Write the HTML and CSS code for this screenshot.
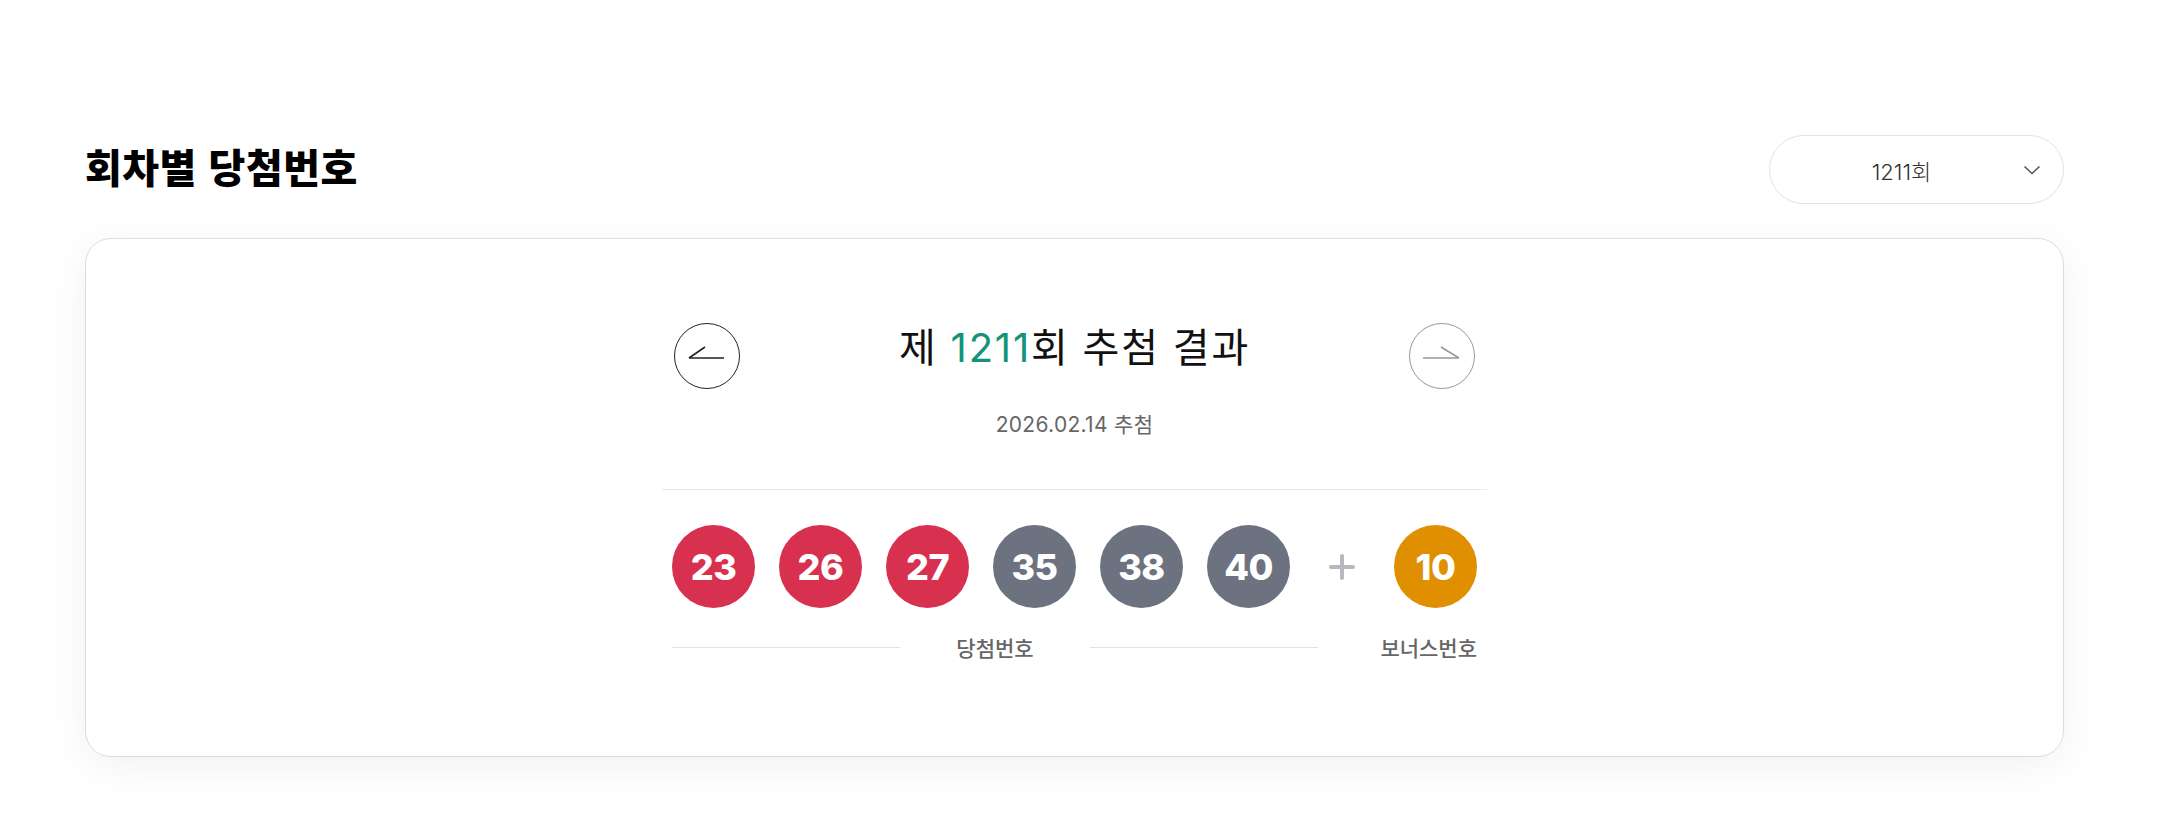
FILE: index.html
```html
<!DOCTYPE html>
<html lang="ko">
<head>
    <meta charset="UTF-8">
    <meta name="viewport" content="width=device-width, initial-scale=1.0">
    <title>회차별 당첨번호</title>
    <link rel="stylesheet" href="styles.css">
</head>
<body>
  <div class="page">
        <div class="section-head">
            <h2 class="section-title">회차별 당첨번호</h2>
            <div class="round-select">
                <span>1211회</span>
                <svg class="chevron" width="18" height="10" viewBox="0 0 18 10"><path d="M1.5 1.5l7.5 7 7.5-7" fill="none" stroke="#555" stroke-width="1.6"/></svg>
            </div>
        </div>

        <div class="result-card">
            <div class="draw-head">
                <button class="nav-btn prev">
                    <svg width="64" height="64" viewBox="0 0 64 64"><path d="M14 34h35M14 34l16-11" fill="none" stroke="#222" stroke-width="1.6"/></svg>
                </button>
                <h3 class="draw-title">제 <em>1211</em>회 추첨 결과</h3>
                <button class="nav-btn next">
                    <svg width="64" height="64" viewBox="0 0 64 64"><path d="M13 34h36M49 34l-18-11" fill="none" stroke="#999" stroke-width="1.6"/></svg>
                </button>
            </div>
            <p class="draw-date">2026.02.14 추첨</p>

            <div class="draw-numbers">
                <div class="balls">
                    <span class="ball red">23</span>
                    <span class="ball red">26</span>
                    <span class="ball red">27</span>
                    <span class="ball gray">35</span>
                    <span class="ball gray">38</span>
                    <span class="ball gray">40</span>
                    <span class="plus"></span>
                    <span class="ball orange">10</span>
                </div>
                <div class="labels">
                    <div class="label-main">
                        <span class="line"></span>
                        <span class="label-text">당첨번호</span>
                        <span class="line"></span>
                    </div>
                    <span class="label-text">보너스번호</span>
                </div>
            </div>
        </div>
    </div>
</body>
</html>
```

FILE: styles.css
```css
     body {
         margin: 0;
         font-family: "Noto Sans CJK KR", sans-serif;
         background-color: #fff;
         color: #222;
     }

     .page {
         width: 1979px;
         padding: 135px 0 60px 85px;
     }

     .section-head {
         display: flex;
         justify-content: space-between;
         align-items: center;
     }

     .section-title {
         margin: 0 0 8px;
         font-size: 40px;
         font-weight: 900;
         color: #000;
         letter-spacing: 0.5px;
     }

     .round-select {
         width: 295px;
         height: 69px;
         box-sizing: border-box;
         border: 1px solid #e2e2e2;
         border-radius: 35px;
         display: flex;
         align-items: center;
         padding: 0 22px 0 10px;
         font-family: Inter, "Noto Sans CJK KR", sans-serif;
         font-size: 22px;
         font-weight: 300;
         color: #333;
     }

     .round-select span {
         flex: 1;
         text-align: center;
     }

     .result-card {
         margin-top: 34px;
         border: 1px solid #dcdcdc;
         border-radius: 26px;
         box-shadow: 0 8px 40px rgba(0, 0, 0, 0.06);
         padding: 84px 0 94px;
     }

     .draw-head {
         width: 802px;
         margin: 0 auto;
         display: flex;
         justify-content: space-between;
         align-items: center;
     }

     .nav-btn {
         width: 66px;
         height: 66px;
         box-sizing: border-box;
         border: 1px solid #222;
         border-radius: 50%;
         background: #fff;
         padding: 0;
         display: flex;
         align-items: center;
         justify-content: center;
         cursor: pointer;
     }

     .nav-btn.next {
         border-color: #999;
     }

     .draw-title {
         margin: 0 0 16px;
         font-family: Inter, "Noto Sans CJK KR", sans-serif;
         font-size: 40px;
         line-height: 48px;
         font-weight: 400;
         letter-spacing: 1.8px;
         color: #111;
     }

     .draw-title em {
         font-style: normal;
         color: #13937a;
     }

     .draw-date {
         margin: 19px 0 0;
         text-align: center;
         font-family: Inter, "Noto Sans CJK KR", sans-serif;
         font-size: 21px;
         letter-spacing: 0.3px;
         color: #666;
     }

     .draw-numbers {
         width: 825px;
         margin: 51px auto 0;
         border-top: 1px solid #e8e8e8;
         padding-top: 35px;
     }

     .balls {
         display: flex;
         align-items: center;
         gap: 24px;
         padding: 0 10px;
     }

     .ball {
         width: 83px;
         height: 83px;
         border-radius: 50%;
         display: flex;
         align-items: center;
         justify-content: center;
         color: #fff;
         font-family: Inter, sans-serif;
         font-size: 36px;
         font-weight: 800;
         letter-spacing: -0.5px;
     }

     .ball.red {
         background-color: #d8304f;
     }

     .ball.gray {
         background-color: #6c7280;
     }

     .ball.orange {
         background-color: #e08f00;
     }

     .plus {
         position: relative;
         width: 26px;
         height: 26px;
         margin: 0 15px;
     }

     .plus::before,
     .plus::after {
         content: "";
         position: absolute;
         background-color: #b5b8c1;
         border-radius: 3px;
     }

     .plus::before {
         left: 0;
         top: 11px;
         width: 26px;
         height: 4px;
     }

     .plus::after {
         left: 11px;
         top: 0;
         width: 4px;
         height: 26px;
     }

     .labels {
         display: flex;
         justify-content: space-between;
         align-items: center;
         padding: 0 10px;
         margin-top: 24px;
     }

     .label-main {
         width: 646px;
         display: flex;
         align-items: center;
         gap: 56px;
     }

     .line {
         flex: 1;
         height: 1px;
         background-color: #e2e2e2;
     }

     .label-text {
         font-size: 21px;
         font-weight: 500;
         color: #666;
     }
```
